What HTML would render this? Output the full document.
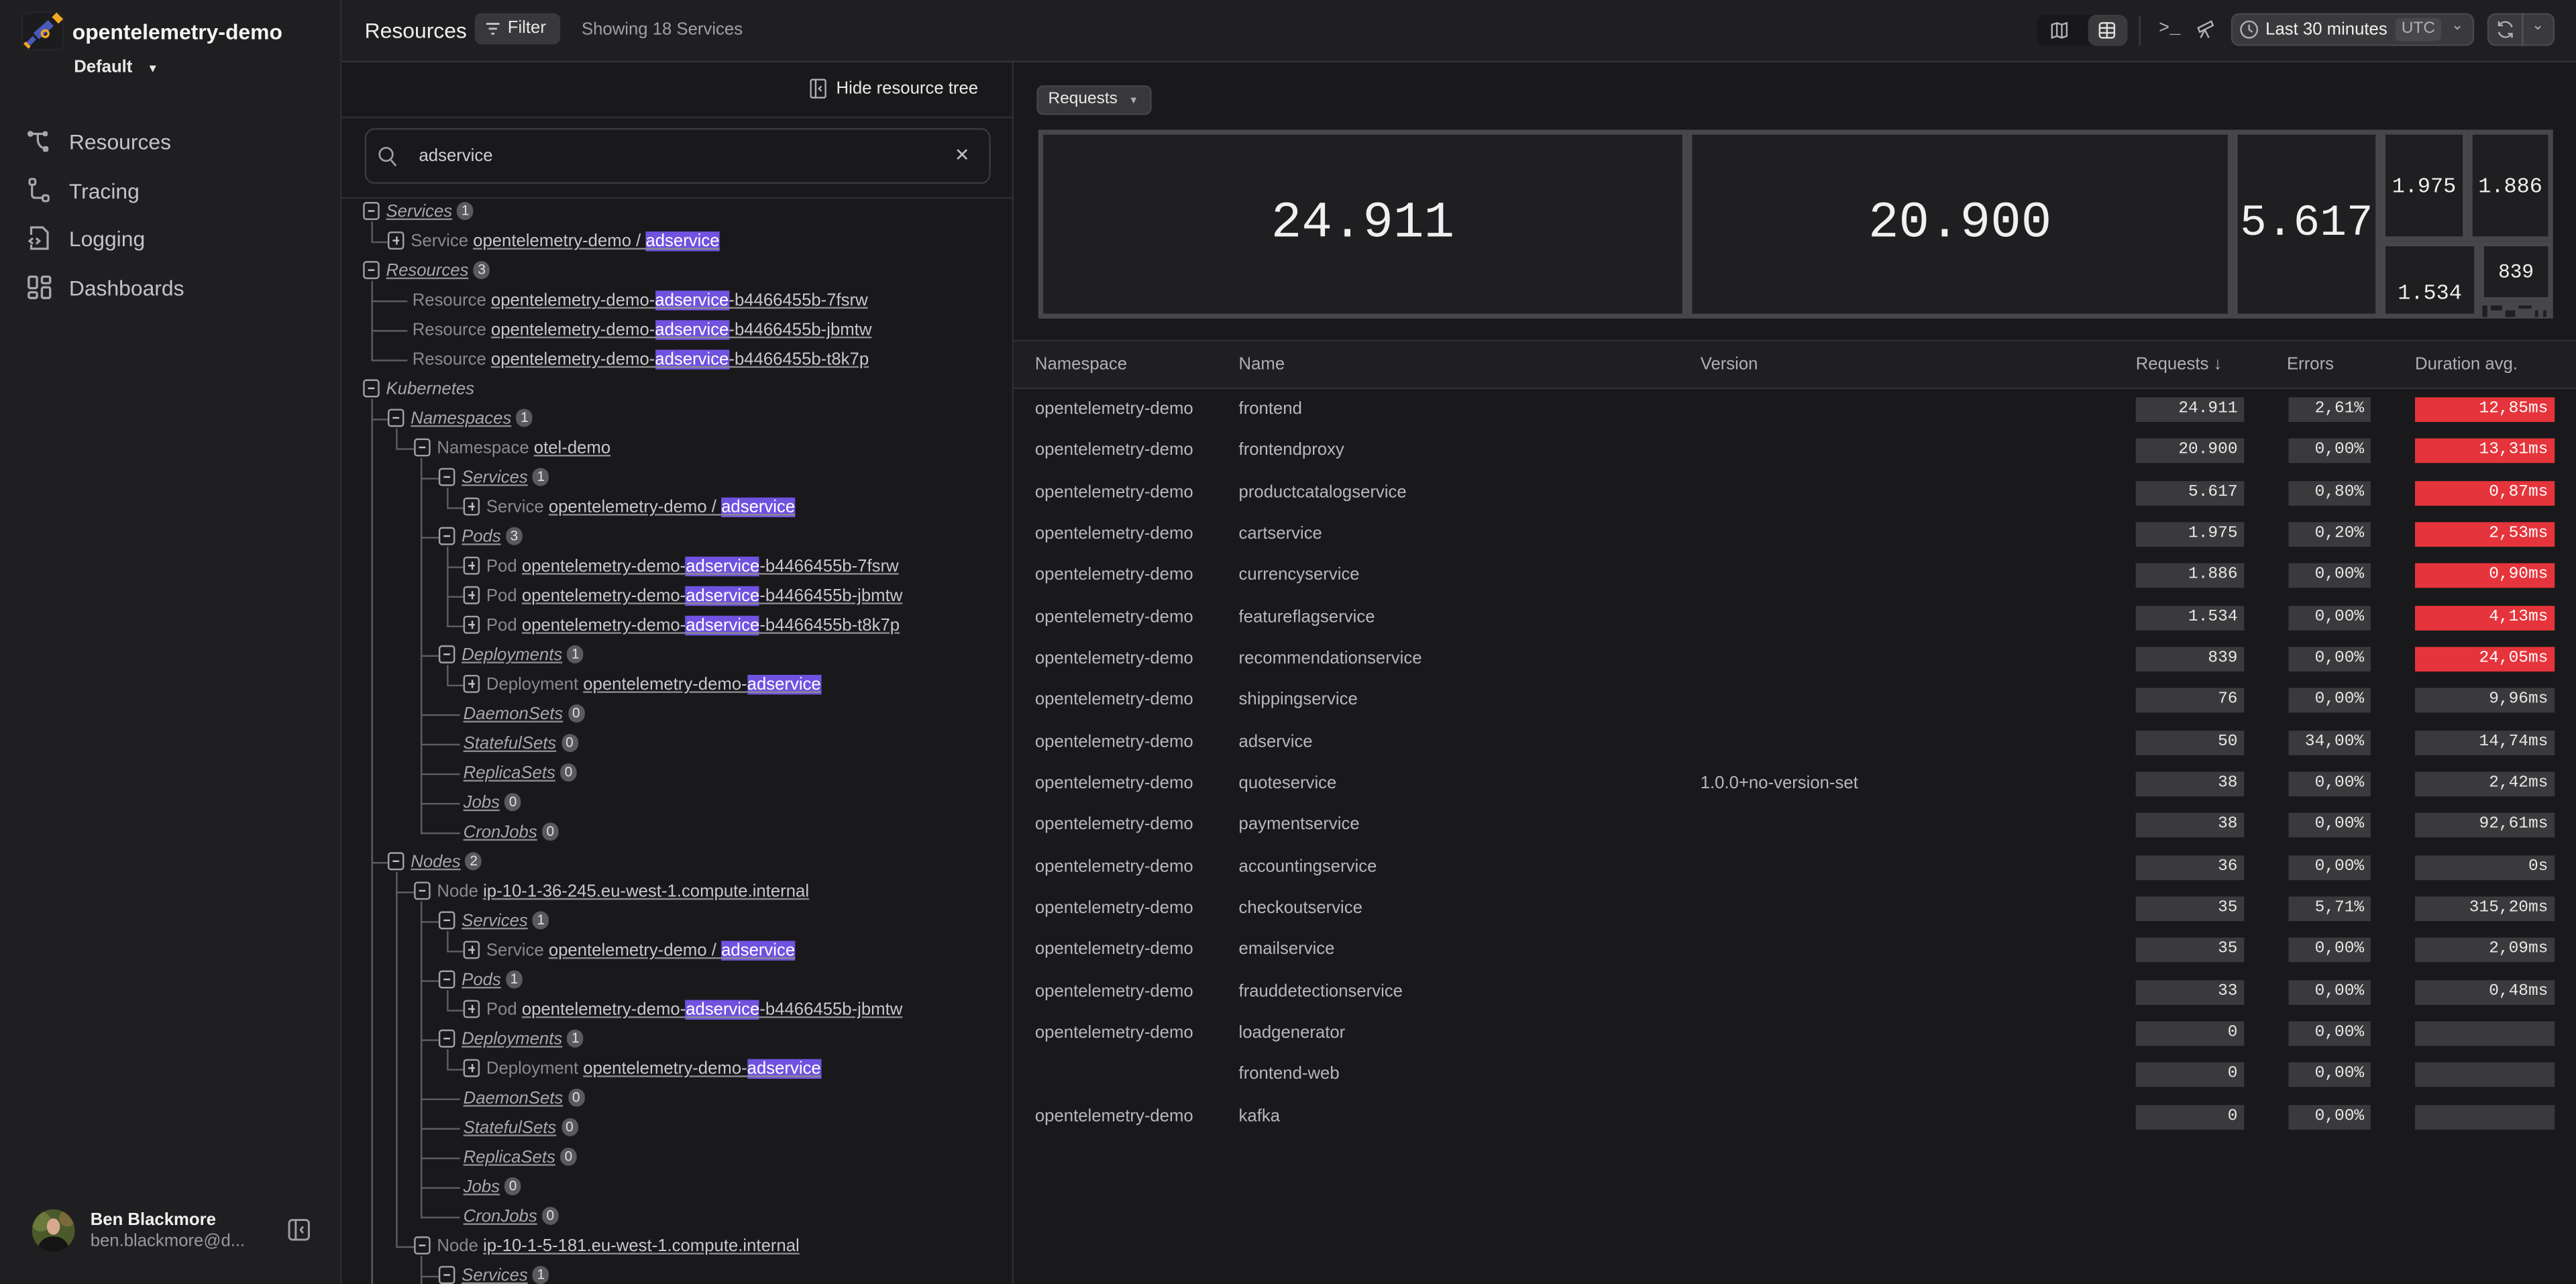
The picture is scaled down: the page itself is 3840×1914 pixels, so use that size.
<!DOCTYPE html>
<html><head><meta charset="utf-8">
<style>
*{box-sizing:border-box;margin:0;padding:0}
html,body{width:3840px;height:1914px;overflow:hidden;background:#19191b}
#s{position:absolute;left:0;top:0;width:1568px;height:782px;transform:scale(2.449,2.4476);transform-origin:0 0;font-family:"Liberation Sans",sans-serif;color:#c8c8cc;background:#19191b;overflow:hidden}
.a{position:absolute}
.side{left:0;top:0;width:208px;height:782px;background:#1f1f21;border-right:1px solid #2c2c2f}
.nav{position:absolute;left:42px;font-size:13px;color:#c4c4c8}
.top{left:208px;top:0;width:1360px;height:38px;background:#1f1f21;border-bottom:1px solid #333336}
.r{position:absolute;height:18px;line-height:18px;font-size:10.5px;color:#8a8a8e;white-space:nowrap}
.bx{display:inline-block;width:10px;height:11px;border:1px solid #a0a0a4;border-radius:2px;vertical-align:-2px;margin-right:4px;position:relative}
.bx::after{content:"";position:absolute;left:2px;top:4px;width:4px;height:1px;background:#c0c0c4}
.bx.p::before{content:"";position:absolute;left:3.5px;top:2px;width:1px;height:5px;background:#c0c0c4}
.u{color:#c8c8cc;text-decoration:underline;text-decoration-color:#8a8a8e}
.i{font-style:italic;color:#a8a8ac}
.h{background:#7052e0;color:#fff}
.n{display:inline-block;min-width:10px;height:11px;line-height:11px;border-radius:6px;background:#5a5a5e;color:#e0e0e0;font-size:8.5px;text-align:center;margin-left:3px;vertical-align:1px;font-style:normal}
.vl{position:absolute;width:1px;background:#5e5e62}
.hl{position:absolute;height:1px;background:#5e5e62}
.tm{position:absolute;border:3px solid #474749;background:#1f1f21;color:#f0f0f0;font-family:"Liberation Mono",monospace;display:flex;align-items:center;justify-content:center}
.row{position:absolute;left:617px;width:951px;height:25px;font-size:10.5px;color:#b8b8bc}
.row span{position:absolute;top:0;line-height:25px}
.bar{position:absolute;top:5px;height:15px;line-height:15px;background:#3a3a3d;color:#e8e8e8;font-family:"Liberation Mono",monospace;font-size:10px;text-align:right;padding-right:4px}
.red{background:#e5343b;color:#fff}
</style></head><body><div id="s">

<div class="a side">
 <svg class="a" style="left:13px;top:7px" width="26" height="24" viewBox="0 0 26 24"><rect x="0.5" y="0.5" width="25" height="23" rx="4" fill="#1c1c1e" stroke="#262628"/><path d="M20 2 l4 4" stroke="#f5a623" stroke-width="4"/><path d="M18 7 L9 15" stroke="#4a5ab8" stroke-width="5"/><circle cx="14.5" cy="13.5" r="2" fill="none" stroke="#f5a623" stroke-width="1.4"/><path d="M8 16 L4 20" stroke="#4a5ab8" stroke-width="3"/><path d="M2 19 l3 3" stroke="#f5a623" stroke-width="2"/></svg>
 <div class="a" style="left:44px;top:12px;font-size:13px;font-weight:bold;color:#f4f4f4">opentelemetry-demo</div>
 <div class="a" style="left:45px;top:35px;font-size:10.5px;font-weight:bold;color:#e8e8e8">Default <span style="font-size:7px;margin-left:6px">▼</span></div>
 <svg class="a" style="left:16px;top:79px" width="16" height="16" viewBox="0 0 16 16" fill="#a8a8ac"><circle cx="2.5" cy="2.5" r="1.8"/><rect x="10" y="1" width="3" height="3" rx="1"/><rect x="10" y="10" width="3.5" height="3.5" rx="1.2"/><path d="M4 2.5h6M7 2.5v3q0 4 3 5.5" stroke="#a8a8ac" stroke-width="1.3" fill="none"/></svg>
 <div class="nav" style="top:79px">Resources</div>
 <svg class="a" style="left:16px;top:108px" width="16" height="16" viewBox="0 0 16 16" fill="none" stroke="#a8a8ac" stroke-width="1.3"><rect x="2" y="1" width="3.5" height="3.5" rx="1"/><path d="M3.5 4.5v6q0 2 2 2h4"/><rect x="10" y="11" width="3.5" height="3.5" rx="1"/></svg>
 <div class="nav" style="top:109px">Tracing</div>
 <svg class="a" style="left:16px;top:137px" width="16" height="16" viewBox="0 0 16 16" fill="none" stroke="#a8a8ac" stroke-width="1.3"><path d="M3 6V1.5h7l3 3V14.5H3V12"/><path d="M4 8l-2 1.8L4 11.5M6 8l2 1.8L6 11.5"/></svg>
 <div class="nav" style="top:138px">Logging</div>
 <svg class="a" style="left:16px;top:167px" width="16" height="16" viewBox="0 0 16 16" fill="none" stroke="#a8a8ac" stroke-width="1.4"><rect x="1.5" y="1.5" width="5" height="7" rx="1"/><rect x="9.5" y="1.5" width="5" height="4" rx="1"/><rect x="1.5" y="11" width="5" height="3.5" rx="1"/><rect x="9.5" y="8" width="5" height="6.5" rx="1"/></svg>
 <div class="nav" style="top:168px">Dashboards</div>
 <svg class="a" style="left:19px;top:736px" width="27" height="27" viewBox="0 0 27 27"><defs><clipPath id="c"><circle cx="13.5" cy="13.5" r="13"/></clipPath></defs><g clip-path="url(#c)"><rect width="27" height="27" fill="#4a5a2a"/><circle cx="6" cy="8" r="6" fill="#6b7a3a"/><circle cx="22" cy="6" r="5" fill="#7a6a3a"/><ellipse cx="13.5" cy="11" rx="4" ry="5" fill="#d8a890"/><path d="M3 27q2-10 10.5-10T24 27z" fill="#141414"/></g></svg>
 <div class="a" style="left:55px;top:737px;font-size:10.5px;font-weight:bold;color:#f0f0f0">Ben Blackmore</div>
 <div class="a" style="left:55px;top:750px;font-size:10.5px;color:#9a9a9e">ben.blackmore@d...</div>
 <svg class="a" style="left:175px;top:742px" width="14" height="14" viewBox="0 0 14 14" fill="none" stroke="#a0a0a4" stroke-width="1.2"><rect x="1" y="1" width="12" height="12" rx="2"/><path d="M5 1v12M9.5 5L8 7l1.5 2"/></svg>
</div>

<div class="a top">
 <div class="a" style="left:14px;top:11px;font-size:13px;color:#f0f0f0">Resources</div>
 <div class="a" style="left:81px;top:8px;width:52px;height:19px;background:#38383b;border-radius:4px;font-size:10.5px;color:#e8e8e8;line-height:19px;padding-left:20px">Filter</div>
 <svg class="a" style="left:87px;top:13px" width="10" height="9" viewBox="0 0 10 9" stroke="#c0c0c4" stroke-width="1.2"><path d="M1 1.5h8M2.5 4.5h5M4 7.5h2"/></svg>
 <div class="a" style="left:146px;top:12px;font-size:10.5px;color:#a0a0a4">Showing 18 Services</div>
 <div class="a" style="left:1032px;top:9px;width:55px;height:19px;background:#18181a;border-radius:5px"></div>
 <div class="a" style="left:1063px;top:9px;width:24px;height:19px;background:#3a3a3d;border-radius:5px"></div>
 <svg class="a" style="left:1040px;top:13px" width="11" height="11" viewBox="0 0 11 11" fill="none" stroke="#b0b0b4" stroke-width="1"><path d="M1 2l3-1 3 1 3-1v8l-3 1-3-1-3 1zM4 1v8M7 2v8"/></svg>
 <svg class="a" style="left:1069px;top:13px" width="11" height="11" viewBox="0 0 11 11" fill="none" stroke="#e0e0e0" stroke-width="1"><rect x="1" y="1" width="9" height="9" rx="1.5"/><path d="M1 4h9M1 7h9M5.5 1v9"/></svg>
 <div class="a" style="left:1094px;top:10px;width:1px;height:18px;background:#3a3a3d"></div>
 <div class="a" style="left:1106px;top:12px;font-size:11px;color:#b0b0b4;font-family:'Liberation Mono',monospace">&gt;_</div>
 <svg class="a" style="left:1128px;top:11px" width="13" height="13" viewBox="0 0 13 13" fill="none" stroke="#b0b0b4" stroke-width="1"><path d="M2 6l8-4 1 2.5-8 4zM6 7l-2.5 5M6 7l2.5 5"/></svg>
 <div class="a" style="left:1150px;top:8px;width:148px;height:20px;background:#3a3a3d;border-radius:5px;border:1px solid #48484b"></div>
 <svg class="a" style="left:1155px;top:12px" width="12" height="12" viewBox="0 0 12 12" fill="none" stroke="#b0b0b4" stroke-width="1"><circle cx="6" cy="6" r="5"/><path d="M6 3v3l2 1.5"/></svg>
 <div class="a" style="left:1171px;top:12px;font-size:10.5px;color:#f0f0f0">Last 30 minutes</div>
 <div class="a" style="left:1250px;top:11px;width:28px;height:14px;background:#48484b;border-radius:3px;font-size:10px;color:#b0b0b4;text-align:center;line-height:14px">UTC</div>
 <div class="a" style="left:1284px;top:10px;font-size:9px;color:#b0b0b4">⌄</div>
 <div class="a" style="left:1306px;top:8px;width:41px;height:20px;background:#3a3a3d;border-radius:5px;border:1px solid #48484b"></div>
 <div class="a" style="left:1327px;top:8px;width:1px;height:20px;background:#555558"></div>
 <svg class="a" style="left:1311px;top:12px" width="12" height="12" viewBox="0 0 12 12" fill="none" stroke="#b0b0b4" stroke-width="1"><path d="M10 4.5A4.3 4.3 0 0 0 2.5 3M2 1v2.5h2.5M2 7.5A4.3 4.3 0 0 0 9.5 9M10 11V8.5H7.5"/></svg>
 <div class="a" style="left:1333px;top:10px;font-size:9px;color:#b0b0b4">⌄</div>
</div>

<div class="a" style="left:616px;top:38px;width:1px;height:744px;background:#2e2e31"></div>
<div class="a" style="left:208px;top:71px;width:408px;height:1px;background:#2e2e31"></div>
<div class="a" style="left:208px;top:120px;width:408px;height:1px;background:#2e2e31"></div>
<svg class="a" style="left:493px;top:48px" width="10" height="12" viewBox="0 0 10 12" fill="none" stroke="#b0b0b4" stroke-width="1"><rect x="0.5" y="0.5" width="9" height="11" rx="1"/><path d="M3.5 0.5v11M7 4.5L5.5 6 7 7.5"/></svg>
<div class="a" style="left:509px;top:48px;font-size:10.5px;color:#e8e8e8">Hide resource tree</div>
<div class="a" style="left:222px;top:78px;width:381px;height:34px;border:1px solid #3a3a3d;border-radius:6px;background:#19191b"></div>
<svg class="a" style="left:230px;top:89px" width="12" height="13" viewBox="0 0 12 13" fill="none" stroke="#a0a0a4" stroke-width="1.1"><circle cx="5" cy="5" r="4"/><path d="M8 8.5l3 3.5"/></svg>
<div class="a" style="left:255px;top:89px;font-size:10.5px;color:#d0d0d4">adservice</div>
<div class="a" style="left:581px;top:88px;font-size:11px;color:#c0c0c4">✕</div>

<div style="position:absolute;left:0;top:1px;width:616px;height:782px">
<div class="vl" style="left:226px;top:134px;height:12px"></div>
<div class="vl" style="left:226px;top:170px;height:48px"></div>
<div class="vl" style="left:226px;top:242px;height:540px"></div>
<div class="vl" style="left:241px;top:260px;height:12px"></div>
<div class="vl" style="left:256px;top:278px;height:228px"></div>
<div class="vl" style="left:272px;top:296px;height:12px"></div>
<div class="vl" style="left:272px;top:332px;height:48px"></div>
<div class="vl" style="left:272px;top:404px;height:12px"></div>
<div class="vl" style="left:241px;top:530px;height:228px"></div>
<div class="vl" style="left:256px;top:548px;height:192px"></div>
<div class="vl" style="left:272px;top:566px;height:12px"></div>
<div class="vl" style="left:272px;top:602px;height:12px"></div>
<div class="vl" style="left:272px;top:638px;height:12px"></div>
<div class="vl" style="left:256px;top:764px;height:18px"></div>
<div class="hl" style="left:226px;top:146px;width:10px"></div>
<div class="hl" style="left:226px;top:182px;width:22px"></div>
<div class="hl" style="left:226px;top:200px;width:22px"></div>
<div class="hl" style="left:226px;top:218px;width:22px"></div>
<div class="hl" style="left:226px;top:254px;width:10px"></div>
<div class="hl" style="left:241px;top:272px;width:11px"></div>
<div class="hl" style="left:256px;top:290px;width:11px"></div>
<div class="hl" style="left:272px;top:308px;width:10px"></div>
<div class="hl" style="left:256px;top:326px;width:11px"></div>
<div class="hl" style="left:272px;top:344px;width:10px"></div>
<div class="hl" style="left:272px;top:362px;width:10px"></div>
<div class="hl" style="left:272px;top:380px;width:10px"></div>
<div class="hl" style="left:256px;top:398px;width:11px"></div>
<div class="hl" style="left:272px;top:416px;width:10px"></div>
<div class="hl" style="left:256px;top:434px;width:24px"></div>
<div class="hl" style="left:256px;top:452px;width:24px"></div>
<div class="hl" style="left:256px;top:470px;width:24px"></div>
<div class="hl" style="left:256px;top:488px;width:24px"></div>
<div class="hl" style="left:256px;top:506px;width:24px"></div>
<div class="hl" style="left:226px;top:524px;width:10px"></div>
<div class="hl" style="left:241px;top:542px;width:11px"></div>
<div class="hl" style="left:256px;top:560px;width:11px"></div>
<div class="hl" style="left:272px;top:578px;width:10px"></div>
<div class="hl" style="left:256px;top:596px;width:11px"></div>
<div class="hl" style="left:272px;top:614px;width:10px"></div>
<div class="hl" style="left:256px;top:632px;width:11px"></div>
<div class="hl" style="left:272px;top:650px;width:10px"></div>
<div class="hl" style="left:256px;top:668px;width:24px"></div>
<div class="hl" style="left:256px;top:686px;width:24px"></div>
<div class="hl" style="left:256px;top:704px;width:24px"></div>
<div class="hl" style="left:256px;top:722px;width:24px"></div>
<div class="hl" style="left:256px;top:740px;width:24px"></div>
<div class="hl" style="left:241px;top:758px;width:11px"></div>
<div class="hl" style="left:256px;top:776px;width:11px"></div>

<div class="r" style="left:221px;top:119px"><span class="bx"></span><span class="u i">Services</span><span class="n">1</span></div>
<div class="r" style="left:236px;top:137px"><span class="bx p"></span>Service <span class="u">opentelemetry-demo / <span class="h">adservice</span></span></div>
<div class="r" style="left:221px;top:155px"><span class="bx"></span><span class="u i">Resources</span><span class="n">3</span></div>
<div class="r" style="left:251px;top:173px">Resource <span class="u">opentelemetry-demo-<span class="h">adservice</span>-b4466455b-7fsrw</span></div>
<div class="r" style="left:251px;top:191px">Resource <span class="u">opentelemetry-demo-<span class="h">adservice</span>-b4466455b-jbmtw</span></div>
<div class="r" style="left:251px;top:209px">Resource <span class="u">opentelemetry-demo-<span class="h">adservice</span>-b4466455b-t8k7p</span></div>
<div class="r" style="left:221px;top:227px"><span class="bx"></span><span class="i">Kubernetes</span></div>
<div class="r" style="left:236px;top:245px"><span class="bx"></span><span class="u i">Namespaces</span><span class="n">1</span></div>
<div class="r" style="left:252px;top:263px"><span class="bx"></span>Namespace <span class="u">otel-demo</span></div>
<div class="r" style="left:267px;top:281px"><span class="bx"></span><span class="u i">Services</span><span class="n">1</span></div>
<div class="r" style="left:282px;top:299px"><span class="bx p"></span>Service <span class="u">opentelemetry-demo / <span class="h">adservice</span></span></div>
<div class="r" style="left:267px;top:317px"><span class="bx"></span><span class="u i">Pods</span><span class="n">3</span></div>
<div class="r" style="left:282px;top:335px"><span class="bx p"></span>Pod <span class="u">opentelemetry-demo-<span class="h">adservice</span>-b4466455b-7fsrw</span></div>
<div class="r" style="left:282px;top:353px"><span class="bx p"></span>Pod <span class="u">opentelemetry-demo-<span class="h">adservice</span>-b4466455b-jbmtw</span></div>
<div class="r" style="left:282px;top:371px"><span class="bx p"></span>Pod <span class="u">opentelemetry-demo-<span class="h">adservice</span>-b4466455b-t8k7p</span></div>
<div class="r" style="left:267px;top:389px"><span class="bx"></span><span class="u i">Deployments</span><span class="n">1</span></div>
<div class="r" style="left:282px;top:407px"><span class="bx p"></span>Deployment <span class="u">opentelemetry-demo-<span class="h">adservice</span></span></div>
<div class="r" style="left:282px;top:425px"><span class="u i">DaemonSets</span><span class="n">0</span></div>
<div class="r" style="left:282px;top:443px"><span class="u i">StatefulSets</span><span class="n">0</span></div>
<div class="r" style="left:282px;top:461px"><span class="u i">ReplicaSets</span><span class="n">0</span></div>
<div class="r" style="left:282px;top:479px"><span class="u i">Jobs</span><span class="n">0</span></div>
<div class="r" style="left:282px;top:497px"><span class="u i">CronJobs</span><span class="n">0</span></div>
<div class="r" style="left:236px;top:515px"><span class="bx"></span><span class="u i">Nodes</span><span class="n">2</span></div>
<div class="r" style="left:252px;top:533px"><span class="bx"></span>Node <span class="u">ip-10-1-36-245.eu-west-1.compute.internal</span></div>
<div class="r" style="left:267px;top:551px"><span class="bx"></span><span class="u i">Services</span><span class="n">1</span></div>
<div class="r" style="left:282px;top:569px"><span class="bx p"></span>Service <span class="u">opentelemetry-demo / <span class="h">adservice</span></span></div>
<div class="r" style="left:267px;top:587px"><span class="bx"></span><span class="u i">Pods</span><span class="n">1</span></div>
<div class="r" style="left:282px;top:605px"><span class="bx p"></span>Pod <span class="u">opentelemetry-demo-<span class="h">adservice</span>-b4466455b-jbmtw</span></div>
<div class="r" style="left:267px;top:623px"><span class="bx"></span><span class="u i">Deployments</span><span class="n">1</span></div>
<div class="r" style="left:282px;top:641px"><span class="bx p"></span>Deployment <span class="u">opentelemetry-demo-<span class="h">adservice</span></span></div>
<div class="r" style="left:282px;top:659px"><span class="u i">DaemonSets</span><span class="n">0</span></div>
<div class="r" style="left:282px;top:677px"><span class="u i">StatefulSets</span><span class="n">0</span></div>
<div class="r" style="left:282px;top:695px"><span class="u i">ReplicaSets</span><span class="n">0</span></div>
<div class="r" style="left:282px;top:713px"><span class="u i">Jobs</span><span class="n">0</span></div>
<div class="r" style="left:282px;top:731px"><span class="u i">CronJobs</span><span class="n">0</span></div>
<div class="r" style="left:252px;top:749px"><span class="bx"></span>Node <span class="u">ip-10-1-5-181.eu-west-1.compute.internal</span></div>
<div class="r" style="left:267px;top:767px"><span class="bx"></span><span class="u i">Services</span><span class="n">1</span></div>
</div>

<div class="a" style="left:631px;top:52px;width:70px;height:18px;background:#38383b;border-radius:4px;border:1px solid #444447;font-size:10px;color:#e8e8e8;line-height:16px;padding-left:6px">Requests <span style="font-size:6px;margin-left:4px;color:#b0b0b4">▼</span></div>
<div class="tm" style="left:632px;top:79px;width:395px;height:115px;font-size:31px">24.911</div>
<div class="tm" style="left:1027px;top:79px;width:332px;height:115px;font-size:31px">20.900</div>
<div class="tm" style="left:1359px;top:79px;width:90px;height:115px;font-size:27px">5.617</div>
<div class="tm" style="left:1449px;top:79px;width:53px;height:68px;font-size:13px">1.975</div>
<div class="tm" style="left:1502px;top:79px;width:52px;height:68px;font-size:13px">1.886</div>
<div class="tm" style="left:1449px;top:147px;width:60px;height:47px;font-size:13px;padding-top:16px">1.534</div>
<div class="tm" style="left:1509px;top:147px;width:45px;height:37px;font-size:12px">839</div>
<div class="a" style="left:1509px;top:184px;width:45px;height:10px;background:#474749"></div>
<div class="a" style="left:1511px;top:186px;width:3px;height:7px;background:#1f1f21"></div>
<div class="a" style="left:1516px;top:186px;width:7px;height:3px;background:#1f1f21"></div>
<div class="a" style="left:1525px;top:189px;width:6px;height:4px;background:#1f1f21"></div>
<div class="a" style="left:1533px;top:186px;width:8px;height:2px;background:#1f1f21"></div>
<div class="a" style="left:1543px;top:189px;width:2px;height:4px;background:#1f1f21"></div>
<div class="a" style="left:1548px;top:189px;width:2px;height:4px;background:#1f1f21"></div>

<div class="a" style="left:617px;top:207px;width:951px;height:30px;background:#1f1f21;border-top:1px solid #2e2e31;border-bottom:1px solid #2e2e31"></div>
<div class="a" style="left:630px;top:216px;font-size:10.5px;color:#b0b0b4">Namespace</div>
<div class="a" style="left:754px;top:216px;font-size:10.5px;color:#b0b0b4">Name</div>
<div class="a" style="left:1035px;top:216px;font-size:10.5px;color:#b0b0b4">Version</div>
<div class="a" style="left:1300px;top:216px;font-size:10.5px;color:#b0b0b4">Requests ↓</div>
<div class="a" style="left:1392px;top:216px;font-size:10.5px;color:#b0b0b4">Errors</div>
<div class="a" style="left:1470px;top:216px;font-size:10.5px;color:#b0b0b4">Duration avg.</div>

<div style="position:absolute;left:0;top:1px;width:1568px;height:782px">
<div class="row" style="top:236px"><span style="left:13px">opentelemetry-demo</span><span style="left:137px">frontend</span><div class="bar" style="left:683px;width:66px">24.911</div><div class="bar" style="left:776px;width:50px">2,61%</div><div class="bar red" style="left:853px;width:85px">12,85ms</div></div>
<div class="row" style="top:261px"><span style="left:13px">opentelemetry-demo</span><span style="left:137px">frontendproxy</span><div class="bar" style="left:683px;width:66px">20.900</div><div class="bar" style="left:776px;width:50px">0,00%</div><div class="bar red" style="left:853px;width:85px">13,31ms</div></div>
<div class="row" style="top:287px"><span style="left:13px">opentelemetry-demo</span><span style="left:137px">productcatalogservice</span><div class="bar" style="left:683px;width:66px">5.617</div><div class="bar" style="left:776px;width:50px">0,80%</div><div class="bar red" style="left:853px;width:85px">0,87ms</div></div>
<div class="row" style="top:312px"><span style="left:13px">opentelemetry-demo</span><span style="left:137px">cartservice</span><div class="bar" style="left:683px;width:66px">1.975</div><div class="bar" style="left:776px;width:50px">0,20%</div><div class="bar red" style="left:853px;width:85px">2,53ms</div></div>
<div class="row" style="top:337px"><span style="left:13px">opentelemetry-demo</span><span style="left:137px">currencyservice</span><div class="bar" style="left:683px;width:66px">1.886</div><div class="bar" style="left:776px;width:50px">0,00%</div><div class="bar red" style="left:853px;width:85px">0,90ms</div></div>
<div class="row" style="top:363px"><span style="left:13px">opentelemetry-demo</span><span style="left:137px">featureflagservice</span><div class="bar" style="left:683px;width:66px">1.534</div><div class="bar" style="left:776px;width:50px">0,00%</div><div class="bar red" style="left:853px;width:85px">4,13ms</div></div>
<div class="row" style="top:388px"><span style="left:13px">opentelemetry-demo</span><span style="left:137px">recommendationservice</span><div class="bar" style="left:683px;width:66px">839</div><div class="bar" style="left:776px;width:50px">0,00%</div><div class="bar red" style="left:853px;width:85px">24,05ms</div></div>
<div class="row" style="top:413px"><span style="left:13px">opentelemetry-demo</span><span style="left:137px">shippingservice</span><div class="bar" style="left:683px;width:66px">76</div><div class="bar" style="left:776px;width:50px">0,00%</div><div class="bar" style="left:853px;width:85px">9,96ms</div></div>
<div class="row" style="top:439px"><span style="left:13px">opentelemetry-demo</span><span style="left:137px">adservice</span><div class="bar" style="left:683px;width:66px">50</div><div class="bar" style="left:776px;width:50px">34,00%</div><div class="bar" style="left:853px;width:85px">14,74ms</div></div>
<div class="row" style="top:464px"><span style="left:13px">opentelemetry-demo</span><span style="left:137px">quoteservice</span><span style="left:418px">1.0.0+no-version-set</span><div class="bar" style="left:683px;width:66px">38</div><div class="bar" style="left:776px;width:50px">0,00%</div><div class="bar" style="left:853px;width:85px">2,42ms</div></div>
<div class="row" style="top:489px"><span style="left:13px">opentelemetry-demo</span><span style="left:137px">paymentservice</span><div class="bar" style="left:683px;width:66px">38</div><div class="bar" style="left:776px;width:50px">0,00%</div><div class="bar" style="left:853px;width:85px">92,61ms</div></div>
<div class="row" style="top:515px"><span style="left:13px">opentelemetry-demo</span><span style="left:137px">accountingservice</span><div class="bar" style="left:683px;width:66px">36</div><div class="bar" style="left:776px;width:50px">0,00%</div><div class="bar" style="left:853px;width:85px">0s</div></div>
<div class="row" style="top:540px"><span style="left:13px">opentelemetry-demo</span><span style="left:137px">checkoutservice</span><div class="bar" style="left:683px;width:66px">35</div><div class="bar" style="left:776px;width:50px">5,71%</div><div class="bar" style="left:853px;width:85px">315,20ms</div></div>
<div class="row" style="top:565px"><span style="left:13px">opentelemetry-demo</span><span style="left:137px">emailservice</span><div class="bar" style="left:683px;width:66px">35</div><div class="bar" style="left:776px;width:50px">0,00%</div><div class="bar" style="left:853px;width:85px">2,09ms</div></div>
<div class="row" style="top:591px"><span style="left:13px">opentelemetry-demo</span><span style="left:137px">frauddetectionservice</span><div class="bar" style="left:683px;width:66px">33</div><div class="bar" style="left:776px;width:50px">0,00%</div><div class="bar" style="left:853px;width:85px">0,48ms</div></div>
<div class="row" style="top:616px"><span style="left:13px">opentelemetry-demo</span><span style="left:137px">loadgenerator</span><div class="bar" style="left:683px;width:66px">0</div><div class="bar" style="left:776px;width:50px">0,00%</div><div class="bar" style="left:853px;width:85px"></div></div>
<div class="row" style="top:641px"><span style="left:137px">frontend-web</span><div class="bar" style="left:683px;width:66px">0</div><div class="bar" style="left:776px;width:50px">0,00%</div><div class="bar" style="left:853px;width:85px"></div></div>
<div class="row" style="top:667px"><span style="left:13px">opentelemetry-demo</span><span style="left:137px">kafka</span><div class="bar" style="left:683px;width:66px">0</div><div class="bar" style="left:776px;width:50px">0,00%</div><div class="bar" style="left:853px;width:85px"></div></div>
</div>

</div></body></html>
